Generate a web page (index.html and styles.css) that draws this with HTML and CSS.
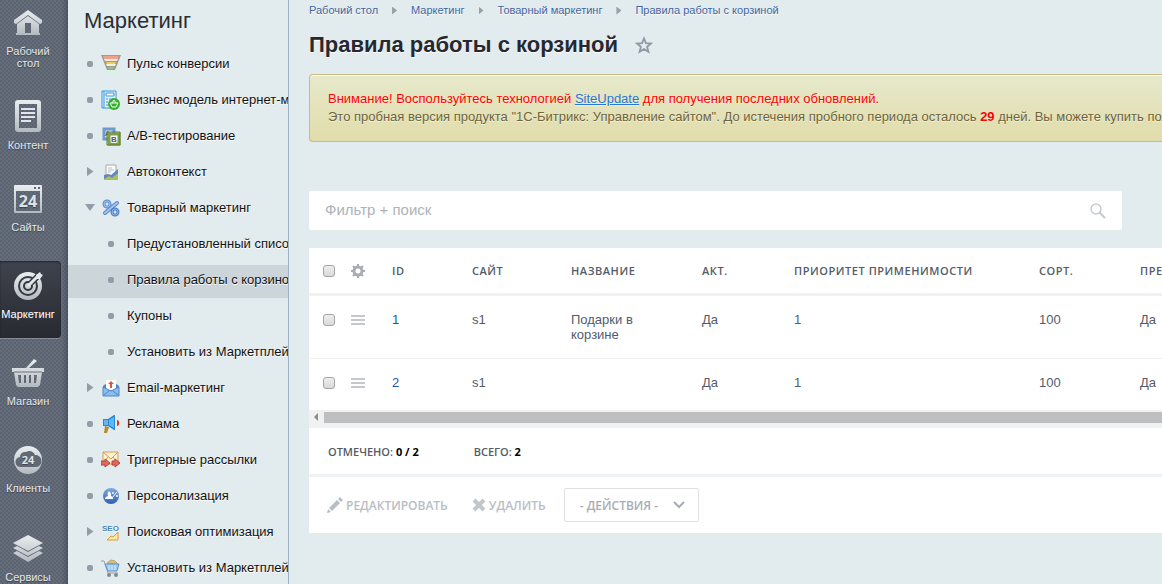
FILE: index.html
```html
<!DOCTYPE html>
<html lang="ru">
<head>
<meta charset="UTF-8">
<meta name="viewport" content="width=device-width, initial-scale=1.0">
<title>Правила работы с корзиной</title>
<link rel="stylesheet" href="styles.css">
</head>
<body>

<svg class="defs" width="0" height="0" aria-hidden="true">
    <defs>
        <linearGradient id="metal" x1="0" y1="0" x2="0" y2="1">
            <stop offset="0" stop-color="#e9eef0"/>
            <stop offset="1" stop-color="#b3babf"/>
        </linearGradient>
        <linearGradient id="blue" x1="0" y1="0" x2="0" y2="1">
            <stop offset="0" stop-color="#7fa9e4"/>
            <stop offset="1" stop-color="#2f5fb0"/>
        </linearGradient>
    </defs>
</svg>

<div class="page">

    <!-- main sections -->
    <nav class="rail">
        <a href="#" class="rail-item">
            <svg width="30" height="28" viewBox="0 0 30 28">
                <path fill="url(#metal)" d="M15 0 1 10v3l2 1L15 5l12 9 2-1v-3zM4 14v9H3v2h24v-2h-1v-9l-11-8zm8-1h6v10h-6z" fill-rule="evenodd"/>
            </svg>
            <span>Рабочий стол</span>
        </a>
        <a href="#" class="rail-item">
            <svg width="28" height="35" viewBox="0 0 28 35">
                <path fill="url(#metal)" fill-rule="evenodd" d="M4 3h20a3 3 0 0 1 3 3v26a3 3 0 0 1-3 3H4a3 3 0 0 1-3-3V6a3 3 0 0 1 3-3zm1 4v24h18V7z"/>
                <path stroke="#dfe5e8" stroke-width="2" d="M7 12h14M7 16h14M7 20h14M7 24h10"/>
            </svg>
            <span>Контент</span>
        </a>
        <a href="#" class="rail-item">
            <svg width="28" height="30" viewBox="0 0 28 30">
                <path fill="url(#metal)" fill-rule="evenodd" d="M1 1h26a1 1 0 0 1 1 1v26a1 1 0 0 1-1 1H1a1 1 0 0 1-1-1V2a1 1 0 0 1 1-1zm1 6v20h24V7zm18-4v2h2V3zm4 0v2h2V3z"/>
                <text class="svg-num" x="14" y="23" font-size="16" text-anchor="middle">24</text>
            </svg>
            <span>Сайты</span>
        </a>
        <a href="#" class="rail-item rail-item-active">
            <svg width="30" height="30" viewBox="0 0 30 30">
                <circle cx="15" cy="15" r="14" fill="url(#metal)"/>
                <circle cx="15" cy="15" r="9" fill="none" stroke="#343840" stroke-width="2"/>
                <circle cx="15" cy="15" r="4" fill="none" stroke="#343840" stroke-width="2"/>
                <path stroke="#343840" stroke-width="6" d="M18 12 28 2"/>
                <path stroke="#e3e8ea" stroke-width="3" d="M15 15 27 3"/>
                <path fill="#e3e8ea" d="m23 4 4-3 1 2 2 1-3 4h-4z"/>
            </svg>
            <span>Маркетинг</span>
        </a>
        <a href="#" class="rail-item">
            <svg width="32" height="30" viewBox="0 0 32 30">
                <path fill="url(#metal)" fill-rule="evenodd" d="m22 1 3 2-8 7h15v4h-2l-2 13-2 2H6l-2-2L2 14H0v-4h14zM6 17l1 8h2v-8zm6 0v8h2v-8zm5 0v8h2v-8zm5 0v8h2l1-8z"/>
                <path stroke="#69717d" d="M2 14h28"/>
            </svg>
            <span>Магазин</span>
        </a>
        <a href="#" class="rail-item">
            <svg width="30" height="30" viewBox="0 0 30 30">
                <circle cx="15" cy="15" r="14" fill="url(#metal)"/>
                <path fill="#626975" d="M8 22a5 5 0 0 1-1-10 5 5 0 0 1 6-5 6 6 0 0 1 9 3 6 6 0 0 1 1 12z"/>
                <text class="svg-num" x="15" y="19" font-size="11" text-anchor="middle">24</text>
            </svg>
            <span>Клиенты</span>
        </a>
        <a href="#" class="rail-item">
            <svg width="32" height="32" viewBox="0 0 32 32">
                <path fill="url(#metal)" d="m16 3 15 8-15 8-15-8zM1 16l4-2 11 6 11-6 4 2-15 8zM1 21l4-2 11 6 11-6 4 2-15 9z"/>
            </svg>
            <span>Сервисы</span>
        </a>
    </nav>

    <!-- section menu -->
    <aside class="menu">
        <h2 class="menu-title">Маркетинг</h2>
        <ul class="menu-list">
            <li><a href="#" class="menu-item">
                <i class="dot"></i>
                <svg width="20" height="20" viewBox="0 0 20 20">
                    <path fill="#9b9a94" d="M0 1h20l-6 15H6z"/>
                    <path fill="#f0a08c" d="M2 2h16l-1 3H3z"/>
                    <path fill="#f8ece0" d="M3 5h14l-1 2H4z"/>
                    <path fill="#f5cc5a" d="M5 8h10l-1 2H6z"/>
                    <path fill="#f4f1dc" d="M5 10h10l-1 2H6z"/>
                    <path fill="#86d26a" d="M7 13h6l-1 2H8z"/>
                </svg>
                <span>Пульс конверсии</span></a></li>
            <li><a href="#" class="menu-item">
                <i class="dot"></i>
                <svg width="20" height="20" viewBox="0 0 20 20">
                    <path fill="#e4f2fc" stroke="#3396dc" stroke-width="1" d="M1 1h14v17H1z"/>
                    <path stroke="#3396dc" d="M3 1v17M5 3h8v3H5zM5 9h2m1 0h2m1 0h2M5 12h2m1 0h2M5 15h2" fill="#fff"/>
                    <circle cx="13" cy="14" r="6" fill="#35b02a"/>
                    <path fill="none" stroke="#fff" d="M9 13h8l-2 4h-4zM11 13l2-3 2 3"/>
                </svg>
                <span>Бизнес модель интернет-магазина</span></a></li>
            <li><a href="#" class="menu-item">
                <i class="dot"></i>
                <svg width="20" height="20" viewBox="0 0 20 20">
                    <path fill="#dcebf7" stroke="#6d9bd0" stroke-width="3" d="M3 3h10v10H3z"/>
                    <text class="svg-letter" x="4" y="10" font-size="7">A</text>
                    <path fill="#fff" stroke="#7d9d48" stroke-width="3" d="M8 8h10v10H8z"/>
                    <path fill="none" stroke="#5f7d30" d="M6 6h13v13H6z"/>
                    <text class="svg-letter" x="10" y="16" font-size="8">B</text>
                </svg>
                <span>А/В-тестирование</span></a></li>
            <li><a href="#" class="menu-item">
                <i class="arrow"></i>
                <svg width="18" height="18" viewBox="0 0 18 18">
                    <path fill="#fafafa" stroke="#a5a9ac" d="M4 2h10v14H4z"/>
                    <path stroke="#bcc0c4" d="M6 5h4M6 7h6M6 9h3"/>
                    <path fill="#a9bf59" d="m2 15 5-4 4 3 5-6v9H2z"/>
                    <path fill="#5f88cb" d="m2 12 4-1 3 1 7-6v4l-6 5-3-2-5 3z"/>
                </svg>
                <span>Автоконтекст</span></a></li>
            <li><a href="#" class="menu-item">
                <i class="arrow arrow-open"></i>
                <svg width="18" height="18" viewBox="0 0 18 18" fill="none">
                    <path stroke="#5484cc" stroke-width="4" stroke-linecap="round" d="M15 4 3 14"/>
                    <path stroke="#a4c5ef" stroke-width="2" stroke-linecap="round" d="M15 4 3 14"/>
                    <circle cx="5" cy="5" r="3" stroke="#5f8dd2" stroke-width="3"/>
                    <circle cx="5" cy="5" r="3" stroke="#a4c5ef"/>
                    <circle cx="13" cy="13" r="3" stroke="#4a7cc8" stroke-width="3"/>
                    <circle cx="13" cy="13" r="3" stroke="#92b8ea"/>
                </svg>
                <span>Товарный маркетинг</span></a>
                <ul class="menu-list menu-sub">
                    <li><a href="#" class="menu-item"><i class="dot"></i><span>Предустановленный список</span></a></li>
                    <li><a href="#" class="menu-item menu-item-active"><i class="dot"></i><span>Правила работы с корзиной</span></a></li>
                    <li><a href="#" class="menu-item"><i class="dot"></i><span>Купоны</span></a></li>
                    <li><a href="#" class="menu-item"><i class="dot"></i><span>Установить из Маркетплейс</span></a></li>
                </ul>
            </li>
            <li><a href="#" class="menu-item">
                <i class="arrow"></i>
                <svg width="18" height="18" viewBox="0 0 18 18">
                    <path fill="#4a86c9" d="M1 7 9 1l8 6v10H1z"/>
                    <path fill="#fff" d="M4 1h10v10H4z"/>
                    <path fill="#e2553b" d="m9 2 3 3h-2v4H8V5H6z"/>
                    <path fill="#8dbdf0" stroke="#4a86c9" d="m1 8 8 4 8-4v9H1z"/>
                    <path fill="none" stroke="#4a86c9" d="m2 16 5-4m9 4-5-4"/>
                </svg>
                <span>Email-маркетинг</span></a></li>
            <li><a href="#" class="menu-item">
                <i class="dot"></i>
                <svg width="18" height="18" viewBox="0 0 18 18">
                    <path fill="#b88a2f" d="m3 11 4 1-2 6H2z"/>
                    <path fill="#2c86d3" d="M1 4h5l6-4h1v15h-1l-6-4H1z"/>
                    <path fill="#5fb8f6" d="M2 5h4v5H2zM7 5l5-3v11l-5-3z"/>
                    <path fill="#d93a2b" d="M15 5c3 0 3 6 0 6z"/>
                </svg>
                <span>Реклама</span></a></li>
            <li><a href="#" class="menu-item">
                <i class="dot"></i>
                <svg width="20" height="20" viewBox="0 0 20 20">
                    <path fill="#fdf0d3" stroke="#dc9a50" d="M2 2h15v12H2z"/>
                    <path fill="none" stroke="#dc9a50" d="m2 2 8 7 7-7M2 14l5-7m10 7-5-7"/>
                    <path fill="#e0685c" stroke="#b74238" d="M0 11h4V9l5 4-5 4v-2H0zM11 11h3V9l5 4-5 4v-2h-3z"/>
                </svg>
                <span>Триггерные рассылки</span></a></li>
            <li><a href="#" class="menu-item">
                <i class="dot"></i>
                <svg width="18" height="18" viewBox="0 0 18 18">
                    <circle cx="9" cy="9" r="8" fill="url(#blue)"/>
                    <path fill="#fff" d="M3 12c0-2 1-2 3-3-2-6 4-6 3 0 2 1 2 1 2 3z"/>
                    <path fill="none" stroke="#fff" d="m15 5-4 5"/>
                    <circle cx="11" cy="6" r="1" fill="#fff"/>
                    <circle cx="15" cy="9" r="1" fill="#fff"/>
                </svg>
                <span>Персонализация</span></a></li>
            <li><a href="#" class="menu-item">
                <i class="arrow"></i>
                <svg width="18" height="18" viewBox="0 0 18 18">
                    <text class="svg-seo" x="0" y="8" font-size="8">SEO</text>
                    <path fill="#fbe9a8" stroke="#dd9a3a" d="m5 17 4-4 2 1 5-5v8z"/>
                </svg>
                <span>Поисковая оптимизация</span></a></li>
            <li><a href="#" class="menu-item">
                <i class="dot"></i>
                <svg width="20" height="20" viewBox="0 0 20 20">
                    <path fill="#b8cf8a" stroke="#cf9a6a" d="m6 5 4-3 4 1 3 3z"/>
                    <path fill="none" stroke="#9a9da1" d="M0 3h3l4 12h10"/>
                    <path fill="#9cc8f0" stroke="#5f94cc" d="M4 6h14l-2 7H7z"/>
                    <path stroke="#dcecfa" d="M8 7v5m3-5v5m3-5v5"/>
                    <circle cx="8" cy="17" r="2" fill="#85898e"/>
                    <circle cx="15" cy="17" r="2" fill="#85898e"/>
                </svg>
                <span>Установить из Маркетплейс</span></a></li>
        </ul>
    </aside>

    <main class="content">
        <nav class="crumbs">
            <a href="#">Рабочий стол</a>
            <a href="#">Маркетинг</a>
            <a href="#">Товарный маркетинг</a>
            <a href="#">Правила работы с корзиной</a>
        </nav>

        <div class="heading">
            <h1>Правила работы с корзиной</h1>
            <button type="button" class="star" aria-label="Добавить в избранное">
                <svg width="18" height="18" viewBox="0 0 18 18">
                    <path fill="none" stroke="#8f99a5" stroke-width="1.8" d="m9 2.500 1.900 4.700 5.100.3-3.900 3.300 1.300 5L9 13.100l-4.400 2.700 1.300-5L2 7.500l5.100-.3z"/>
                </svg>
            </button>
        </div>

        <div class="notice">
            <p class="notice-alert">Внимание! Воспользуйтесь технологией <a href="#">SiteUpdate</a> для получения последних обновлений.</p>
            <p>Это пробная версия продукта "1С-Битрикс: Управление сайтом". До истечения пробного периода осталось <b>29</b> дней. Вы можете купить полную версию продукта.</p>
        </div>

        <form class="filter">
            <input type="text" placeholder="Фильтр + поиск" aria-label="Фильтр + поиск">
            <button type="button" aria-label="Найти">
                <svg width="16" height="16" viewBox="0 0 16 16">
                    <circle cx="6" cy="6" r="5" fill="none" stroke="#c5c9cd" stroke-width="1.4"/>
                    <path stroke="#c5c9cd" stroke-width="2" d="m9 9 6 6"/>
                </svg>
            </button>
        </form>

        <div class="grid">
            <table class="grid-table">
                <colgroup>
                    <col class="col-check"><col class="col-menu"><col class="col-id"><col class="col-site"><col class="col-name"><col class="col-act"><col class="col-priority"><col class="col-sort"><col class="col-stop">
                </colgroup>
                <thead>
                    <tr>
                        <th class="cell-check"><input type="checkbox" aria-label="Отметить все"></th>
                        <th class="cell-menu">
                            <button type="button" class="row-button" aria-label="Настройка">
                                <svg width="14" height="14" viewBox="0 0 14 14">
                                    <circle cx="7" cy="7" r="4" fill="none" stroke="#a8adb4" stroke-width="3"/>
                                    <path stroke="#a8adb4" stroke-width="2" d="M7 0v3M7 11v3M0 7h3M11 7h3M2 2l2 2M10 10l2 2M12 2l-2 2M4 10l-2 2"/>
                                </svg>
                            </button>
                        </th>
                        <th>ID</th>
                        <th>Сайт</th>
                        <th>Название</th>
                        <th>Акт.</th>
                        <th>Приоритет применимости</th>
                        <th>Сорт.</th>
                        <th>Прекратить применение</th>
                    </tr>
                </thead>
                <tbody>
                    <tr>
                        <td class="cell-check"><input type="checkbox" aria-label="Отметить 1"></td>
                        <td class="cell-menu"><button type="button" class="row-button" aria-label="Действия"><i class="burger"></i></button></td>
                        <td><a href="#">1</a></td>
                        <td>s1</td>
                        <td>Подарки в корзине</td>
                        <td>Да</td>
                        <td>1</td>
                        <td>100</td>
                        <td>Да</td>
                    </tr>
                    <tr>
                        <td class="cell-check"><input type="checkbox" aria-label="Отметить 2"></td>
                        <td class="cell-menu"><button type="button" class="row-button" aria-label="Действия"><i class="burger"></i></button></td>
                        <td><a href="#">2</a></td>
                        <td>s1</td>
                        <td></td>
                        <td>Да</td>
                        <td>1</td>
                        <td>100</td>
                        <td>Да</td>
                    </tr>
                </tbody>
            </table>

            <div class="scrollbar">
                <svg width="15" height="11" viewBox="0 0 15 11"><path fill="#8c8c8c" d="m5 5 4-4v8z"/></svg>
                <div class="scrollbar-thumb"></div>
            </div>

            <div class="totals">
                <span>Отмечено: <b>0 / 2</b></span>
                <span>Всего: <b>2</b></span>
            </div>

            <div class="actions">
                <button type="button" class="action">
                    <svg width="16" height="16" viewBox="0 0 16 16">
                        <path fill="#b9bdc4" d="m10 3 3 3-8 8-3-3zM11 2l2-2 3 3-2 2zM1 12l3 3-4 1z"/>
                    </svg>
                    Редактировать
                </button>
                <button type="button" class="action">
                    <svg width="14" height="14" viewBox="0 0 14 14">
                        <path stroke="#c3c7cc" stroke-width="4" d="m2 2 10 10M12 2 2 12"/>
                    </svg>
                    Удалить
                </button>
                <select class="action-select" aria-label="Действия">
                    <option>- ДЕЙСТВИЯ -</option>
                </select>
            </div>
        </div>
    </main>

</div>

</body>
</html>
```
FILE: styles.css
```css
* {
    box-sizing: border-box;
}

body {
    margin: 0;
    background: #e2ebed;
    font-family: "Liberation Sans", Arial, sans-serif;
    font-size: 13px;
    color: #111;
    overflow: hidden;
}

a {
    color: inherit;
    text-decoration: none;
}

button {
    border: none;
    padding: 0;
    background: none;
    font: inherit;
    cursor: pointer;
}

svg {
    display: block;
    flex: none;
}

.defs {
    position: absolute;
}

.page {
    display: flex;
    height: 100vh;
    overflow: hidden;
}

/* left rail */
.rail {
    flex: none;
    display: flex;
    flex-direction: column;
    gap: 10px;
    width: 68px;
    padding-right: 7px;
    background-color: #666d7b;
    background-image:
        linear-gradient(to right, transparent 62px, rgba(40, 46, 60, .35)),
        radial-gradient(circle at 1px 1px, #5b6270 1px, transparent 1px),
        radial-gradient(circle at 3px 3px, #5b6270 1px, transparent 1px);
    background-size: auto, 4px 4px, 4px 4px;
}

.rail-item {
    flex: none;
    display: flex;
    flex-direction: column;
    align-items: center;
    gap: 7px;
    height: 77px;
    padding: 10px 5px 0 0;
    font-size: 11px;
    line-height: 12px;
    text-align: center;
    color: #e4e8eb;
    text-shadow: 0 1px 1px #3c424e;
}

.rail-item span {
    max-width: 56px;
}

.rail-item-active {
    border-radius: 0 4px 4px 0;
    background: linear-gradient(#3f434d, #272a31);
    box-shadow: 0 1px 0 #868d98, inset 0 1px 2px #22252c;
    color: #fff;
}

.svg-num {
    font-family: "Open Sans", sans-serif;
    font-weight: bold;
    fill: #dce2e5;
}

.svg-letter {
    font-family: "Liberation Sans", Arial, sans-serif;
    font-weight: bold;
    fill: #555;
}

.svg-seo {
    font-family: "Liberation Sans", Arial, sans-serif;
    font-weight: bold;
    fill: #4584c4;
}

/* section menu */
.menu {
    flex: none;
    width: 221px;
    border-right: 1px solid #9cb2cb;
    overflow: hidden;
}

.menu-title {
    margin: 0;
    padding: 8px 16px 15px;
    font-size: 22px;
    line-height: 26px;
    font-weight: normal;
    color: #2b2d33;
}

.menu-list {
    display: flex;
    flex-direction: column;
    gap: 3px;
    margin: 0;
    padding: 0;
    list-style: none;
}

.menu-sub {
    margin-top: 3px;
}

.menu-item {
    display: grid;
    grid-template-columns: 16px 26px max-content;
    align-items: center;
    justify-items: center;
    height: 33px;
    padding: 0 0 4px 14px;
    white-space: nowrap;
    text-shadow: 0 1px 0 #fff;
}

.menu-item span {
    padding-left: 3px;
}

.menu-sub .menu-item {
    grid-template-columns: 26px max-content;
    padding-left: 30px;
}

.menu-item-active {
    background: #cbd5da;
}

.dot {
    width: 6px;
    height: 6px;
    border-radius: 2px;
    background: #939ca8;
}

.arrow {
    width: 7px;
    height: 10px;
    background: #939ca8;
    clip-path: polygon(0 0, 100% 50%, 0 100%);
}

.arrow-open {
    width: 10px;
    height: 7px;
    clip-path: polygon(0 0, 100% 0, 50% 100%);
}

/* content */
.content {
    flex: 1;
    min-width: 0;
    padding: 4px 0 0 20px;
    overflow: hidden;
}

.crumbs {
    display: flex;
    font-size: 11px;
    line-height: 13px;
    color: #3f64a0;
    text-shadow: 0 1px 0 #fff;
}

.crumbs a {
    display: flex;
    align-items: center;
}

.crumbs a + a::before {
    content: "";
    width: 5px;
    height: 8px;
    margin: 0 14px;
    background: #97a0a9;
    clip-path: polygon(0 0, 100% 50%, 0 100%);
}

.heading {
    display: flex;
    align-items: center;
    gap: 17px;
    margin: 14px 0 16px;
}

.heading h1 {
    margin: 0;
    font-size: 22px;
    line-height: 27px;
    color: #26282f;
    text-shadow: 0 1px 0 #fff;
}

.notice {
    padding: 15px 18px;
    border: 1px solid #c9bb85;
    border-right: none;
    border-radius: 4px 0 0 4px;
    background: linear-gradient(#e6e9cb, #e1dcaa);
    box-shadow: inset 0 1px 0 #fbfbf2;
    line-height: 18px;
    white-space: nowrap;
    color: #6f643c;
    text-shadow: 0 1px 0 #f3f1d8;
    overflow: hidden;
}

.notice p {
    margin: 0;
}

.notice .notice-alert,
.notice b {
    color: #f00;
}

.notice a {
    color: #2675d7;
    text-decoration: underline;
}

.filter {
    display: flex;
    align-items: center;
    height: 39px;
    margin: 49px 40px 18px 0;
    padding: 0 16px;
    border-radius: 2px;
    background: #fff;
}

.filter input {
    flex: 1;
    padding: 0 0 2px;
    border: none;
    outline: none;
    font: 15px "Liberation Sans", Arial, sans-serif;
    color: #535c69;
}

.filter input::placeholder {
    color: #aeb3b9;
}

/* grid */
.grid {
    background: #fff;
    overflow: hidden;
    color: #535c69;
}

.grid-table {
    width: 1100px;
    border-collapse: separate;
    border-spacing: 0;
    table-layout: fixed;
}

.col-check { width: 36px; }
.col-menu { width: 32px; }
.col-id { width: 80px; }
.col-site { width: 99px; }
.col-name { width: 131px; }
.col-act { width: 92px; }
.col-priority { width: 245px; }
.col-sort { width: 101px; }

.grid-table th {
    height: 48px;
    padding: 0 15px;
    border-bottom: 3px solid #eef2f4;
    font: 600 11px "Open Sans", sans-serif;
    letter-spacing: 0.05em;
    text-align: left;
    text-transform: uppercase;
    white-space: nowrap;
}

.grid-table td {
    height: 52px;
    padding: 16px;
    padding-left: 15px;
    line-height: 15px;
    vertical-align: top;
}

.grid-table tbody tr + tr td {
    border-top: 1px solid #eef0f2;
}

.grid-table td a {
    color: #1f55a5;
}

.grid-table .cell-check {
    padding-left: 14px;
    padding-right: 0;
}

.grid-table .cell-menu {
    padding-left: 6px;
    padding-right: 0;
}

.grid-table input {
    display: block;
    appearance: none;
    width: 12px;
    height: 12px;
    margin: 2px 0;
    border: 1px solid #a5a5a5;
    border-radius: 3px;
    background: linear-gradient(#eee, #d9d9d9);
}

.row-button {
    display: block;
    height: 15px;
}

.burger {
    display: block;
    width: 14px;
    height: 10px;
    border: solid #c5c8cd;
    border-width: 2px 0;
    background: linear-gradient(#c5c8cd, #c5c8cd) center / 14px 2px no-repeat;
}

.scrollbar {
    display: flex;
    padding-top: 2px;
    background: #f1f1f1;
}

.scrollbar-thumb {
    flex: 1;
    height: 11px;
    background: #bfbfbf;
}

.totals {
    display: flex;
    align-items: center;
    gap: 55px;
    height: 54px;
    padding: 0 19px;
    border: solid #eef2f4;
    border-width: 5px 0 3px;
    font: 600 11px "Open Sans", sans-serif;
    text-transform: uppercase;
}

.totals b {
    font-weight: 700;
    color: #000;
}

.actions {
    display: flex;
    align-items: center;
    height: 56px;
    padding: 0 18px;
    font: 600 12px "Open Sans", sans-serif;
}

.action {
    display: flex;
    align-items: center;
    gap: 3px;
    margin-right: 24px;
    text-transform: uppercase;
    color: #b9bdc4;
}

.action + .action {
    margin-right: 18px;
}

.action-select {
    appearance: none;
    width: 135px;
    height: 34px;
    padding: 0 15px;
    border: 1px solid #dfe2e5;
    border-radius: 2px;
    background: #fff url("data:image/svg+xml,%3Csvg xmlns='http://www.w3.org/2000/svg' width='12' height='8'%3E%3Cpath d='m1 1 5 5 5-5' fill='none' stroke='%23a8adb4' stroke-width='2'/%3E%3C/svg%3E") right 13px center no-repeat;
    font: inherit;
    color: #a8adb4;
}
```
